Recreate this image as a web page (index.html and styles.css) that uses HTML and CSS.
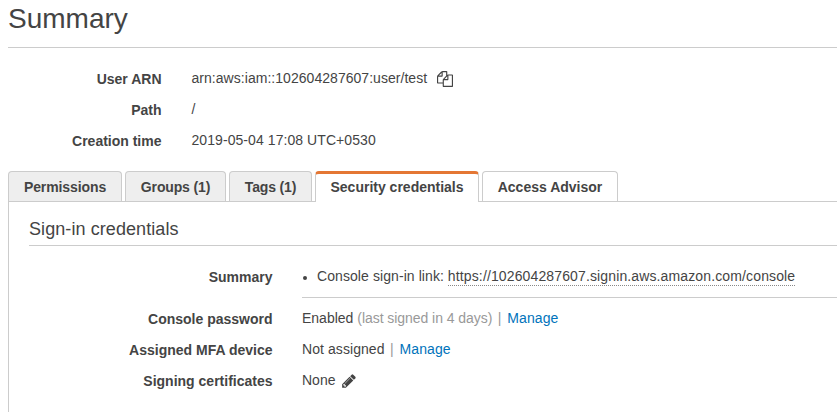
FILE: index.html
```
<!DOCTYPE html>
<html lang="en">
<head>
<meta charset="utf-8">
<title>Summary</title>
<link rel="stylesheet" href="styles.css">
</head>
<body>
<header class="page-head"><h1>Summary</h1></header>
<dl class="details">
  <dt>User ARN</dt>
  <dd><span class="arn">arn:aws:iam::102604287607:user/test</span><svg class="copy" viewBox="0 0 1792 1792"><path d="M1696 384q40 0 68 28t28 68v1216q0 40-28 68t-68 28h-960q-40 0-68-28t-28-68v-288h-544q-40 0-68-28t-28-68v-672q0-40 20-88t48-76l408-408q28-28 76-48t88-20h416q40 0 68 28t28 68v328q68-40 128-40h416zm-544 213l-299 299h299v-299zm-640-384l-299 299h299v-299zm196 647l316-316v-416h-384v416q0 40-28 68t-68 28h-416v640h512v-256q0-40 20-88t48-76zm956 804v-1152h-384v416q0 40-28 68t-68 28h-416v640h896z"/></svg></dd>
  <dt>Path</dt>
  <dd>/</dd>
  <dt>Creation time</dt>
  <dd><span class="date">2019-05-04 17:08 UTC+0530</span></dd>
</dl>
<nav class="tabs">
  <a class="tab muted t1">Permissions</a>
  <a class="tab muted t2">Groups (1)</a>
  <a class="tab muted t3">Tags (1)</a>
  <a class="tab active t4">Security credentials</a>
  <a class="tab t5">Access Advisor</a>
</nav>
<section class="panel">
  <h2>Sign-in credentials</h2>
  <dl class="creds">
    <dt>Summary</dt>
    <dd class="ruled"><ul><li><span class="lbl">Console sign-in link:</span> <span class="url">https://102604287607.signin.aws.amazon.com/console</span></li></ul></dd>
    <dt>Console password</dt>
    <dd>Enabled <span class="dim">(last signed in 4 days)</span> <span class="bar">|</span> <a class="link">Manage</a></dd>
    <dt>Assigned MFA device</dt>
    <dd><span class="status">Not assigned</span> <span class="bar">|</span> <a class="link">Manage</a></dd>
    <dt>Signing certificates</dt>
    <dd>None<svg class="pencil" viewBox="0 0 1792 1792"><path d="M491 1536l91-91-235-235-91 91v107h128v128h107zm523-928q0-22-22-22-10 0-17 7l-542 542q-7 7-7 17 0 22 22 22 10 0 17-7l542-542q7-7 7-17zm-54-192l416 416-832 832h-416v-416zm683 96q0 53-37 90l-166 166-416-416 166-165q36-38 90-38 53 0 91 38l235 234q37 39 37 91z"/></svg></dd>
  </dl>
</section>
</body>
</html>
```
FILE: styles.css
```
* { box-sizing: border-box; }
html { overflow: hidden; }
body {
  margin: 0;
  padding-left: 8px;
  height: 412px;
  overflow: hidden;
  background: #fff;
  color: #444;
  font: 14px/20px "Helvetica Neue", "Liberation Sans", Arial, sans-serif;
  white-space: nowrap;
}
h1, h2, dl, dd, ul { margin: 0; padding: 0; font-weight: 400; }
.page-head { height: 48px; border-bottom: 1px solid #ccc; }
h1 { font-size: 28px; line-height: 38px; }
.details, .creds { display: grid; }
.details {
  grid-template-columns: 153.5px 1fr;
  grid-auto-rows: 31px;
  column-gap: 30px;
  padding-top: 21px;
  height: 123px;
}
dt { font-weight: 700; text-align: right; }
dd { margin-top: -1px; }
svg { fill: #444; }
.arn { letter-spacing: 0.04px; }
.date { letter-spacing: 0.07px; }
.copy { width: 16px; height: 16px; margin-left: 9.5px; vertical-align: -4px; }
.pencil { width: 16px; height: 16px; margin-left: 5.5px; vertical-align: -4px; }
.tabs {
  display: flex;
  gap: 3px;
  height: 31px;
  border-bottom: 1px solid #ccc;
}
.tab {
  height: 30px;
  border: 1px solid #ccc;
  border-bottom: 0;
  border-radius: 4px 4px 0 0;
  background: #fff;
  font-weight: 700;
  line-height: 31px;
  text-align: center;
}
.muted { background: #eee; }
.active { height: 31px; border-top: 3px solid #e47734; line-height: 27px; }
.t1 { width: 114px; letter-spacing: -0.1px; }
.t2 { width: 101px; letter-spacing: -0.15px; }
.t3 { width: 83px; letter-spacing: -0.15px; }
.t4 { width: 164px; }
.t5 { width: 136px; }
.panel { border-left: 1px solid #ccc; padding-left: 20px; height: 220px; }
h2 { height: 44px; padding-top: 15px; border-bottom: 1px solid #ccc; font-size: 18px; line-height: 24px; letter-spacing: 0.08px; }
.creds {
  grid-template-columns: 243.5px 1fr;
  grid-template-rows: 42px 31px 31px 31px;
  column-gap: 29.5px;
  padding-top: 21px;
}
.ruled { height: 32px; border-bottom: 1px solid #ccc; }
ul { padding-left: 15px; }
li::marker { font-size: 12px; }
.lbl { letter-spacing: 0.08px; }
.url { display: inline-block; line-height: 17px; border-bottom: 1px dotted #888; letter-spacing: 0.13px; }
.dim, .bar { color: #999; }
.dim { letter-spacing: -0.05px; }
.bar { margin: 0 2px 0 1.5px; }
.status { letter-spacing: 0.07px; }
.link { color: #0073bb; letter-spacing: 0.1px; }
```
